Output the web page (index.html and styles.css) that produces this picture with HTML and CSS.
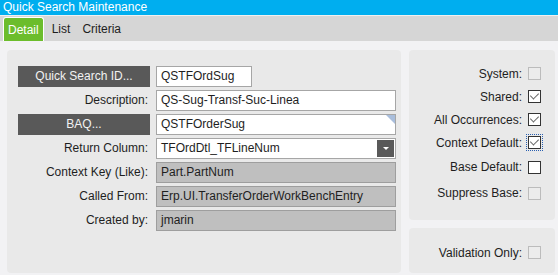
FILE: index.html
```html
<!DOCTYPE html>
<html lang="en">
<head>
    <meta charset="UTF-8">
    <title>Quick Search Maintenance</title>
    <link rel="stylesheet" href="styles.css">
</head>
<body>

<div class="titlebar">Quick Search Maintenance</div>

<div class="tabs">
    <div class="tab active">Detail</div>
    <div class="tab">List</div>
    <div class="tab">Criteria</div>
</div>

<div class="content">
    <div class="panel main">
        <div class="form">
            <div class="btn">Quick Search ID...</div>
            <div class="field short">QSTFOrdSug</div>

            <div class="label">Description:</div>
            <div class="field">QS-Sug-Transf-Suc-Linea</div>

            <div class="btn">BAQ...</div>
            <div class="field flagged">QSTFOrderSug</div>

            <div class="label">Return Column:</div>
            <div class="field combo">
                <span>TFOrdDtl_TFLineNum</span>
                <span class="drop"></span>
            </div>

            <div class="label">Context Key (Like):</div>
            <div class="field readonly">Part.PartNum</div>

            <div class="label">Called From:</div>
            <div class="field readonly">Erp.UI.TransferOrderWorkBenchEntry</div>

            <div class="label">Created by:</div>
            <div class="field readonly">jmarin</div>
        </div>
    </div>

    <div class="side">
        <div class="panel flags">
            <div class="check-row"><span>System:</span><span class="box disabled"></span></div>
            <div class="check-row"><span>Shared:</span><span class="box checked"></span></div>
            <div class="check-row"><span>All Occurrences:</span><span class="box checked"></span></div>
            <div class="check-row"><span>Context Default:</span><span class="box checked focus"></span></div>
            <div class="check-row tall"><span>Base Default:</span><span class="box"></span></div>
            <div class="check-row tall"><span>Suppress Base:</span><span class="box disabled"></span></div>
        </div>
        <div class="panel validation">
            <div class="check-row"><span>Validation Only:</span><span class="box disabled"></span></div>
        </div>
    </div>
</div>

</body>
</html>
```

FILE: styles.css
```css
body {
    margin: 0;
    background-color: #f2f2f4;
    font-family: "Liberation Sans", Arial, sans-serif;
    font-size: 12px;
    color: #1e1e1e;
    width: 558px;
    height: 275px;
    overflow: hidden;
}
.titlebar {
    height: 15px;
    line-height: 14px;
    background-color: #00aeef;
    color: #fff;
    padding-left: 3px;
    border-bottom: 1px solid #f0f0f0;
}
.tabs {
    height: 25px;
    background-color: #d6d6d6;
    display: flex;
    align-items: flex-end;
    padding-left: 3px;
}
.tab {
    height: 24px;
    line-height: 24px;
    padding: 0 12px 0 0;
    color: #1e1e1e;
}
.tab.active {
    background-color: #6cbd2c;
    color: #fff;
    border: 1px solid #fff;
    border-bottom: none;
    border-radius: 3px 3px 0 0;
    padding: 0 4px;
    height: 23px;
    margin-right: 8px;
}
.content {
    display: flex;
    gap: 8px;
    padding: 9px 3px 0 7px;
}
.panel {
    background-color: #e9e9e9;
    border-radius: 4px;
}
.main {
    width: 394px;
    height: 223px;
    box-sizing: border-box;
    padding: 16px 0 0 11px;
}
.form {
    display: grid;
    grid-template-columns: 132px 240px;
    grid-auto-rows: 21px;
    column-gap: 6px;
    row-gap: 3px;
}
.btn {
    background-color: #595959;
    color: #f2f2f2;
    text-align: center;
    line-height: 21px;
}
.label {
    text-align: right;
    line-height: 21px;
    padding-right: 2px;
}
.field {
    background-color: #fff;
    border: 1px solid #a6a6a6;
    box-sizing: border-box;
    line-height: 19px;
    padding-left: 4px;
    white-space: nowrap;
    overflow: hidden;
    position: relative;
}
.field.short {
    width: 96px;
}
.field.flagged::after {
    content: "";
    position: absolute;
    top: 0;
    right: 0;
    border-top: 9px solid #a9bedc;
    border-left: 9px solid transparent;
}
.combo {
    display: flex;
    justify-content: space-between;
    padding-right: 1px;
}
.drop {
    width: 17px;
    height: 17px;
    margin-top: 1px;
    background-color: #595959;
    position: relative;
}
.drop::after {
    content: "";
    position: absolute;
    left: 6px;
    top: 7px;
    border-top: 3px solid #fff;
    border-left: 3px solid transparent;
    border-right: 3px solid transparent;
}
.readonly {
    background-color: #bfbfbf;
    border-color: #9e9e9e;
}
.side {
    display: flex;
    flex-direction: column;
    gap: 8px;
    width: 146px;
}
.flags {
    height: 170px;
    box-sizing: border-box;
    padding-top: 12px;
}
.validation {
    height: 45px;
    box-sizing: border-box;
    padding-top: 13px;
}
.check-row {
    display: flex;
    justify-content: flex-end;
    align-items: center;
    gap: 6px;
    height: 23px;
    padding-right: 14px;
}
.check-row.tall {
    height: 26px;
}
.box {
    width: 11px;
    height: 11px;
    border: 1px solid #333;
    background-color: #fff;
    position: relative;
}
.box.disabled {
    border-color: #bcbcbc;
    background-color: #ececec;
}
.box.checked::after {
    content: "";
    position: absolute;
    left: 3px;
    top: 0;
    width: 4px;
    height: 7px;
    border-right: 1px solid #666;
    border-bottom: 1px solid #666;
    transform: rotate(45deg);
}
.box.focus {
    outline: 1px dotted #2a5fb0;
    outline-offset: 1px;
}
```
